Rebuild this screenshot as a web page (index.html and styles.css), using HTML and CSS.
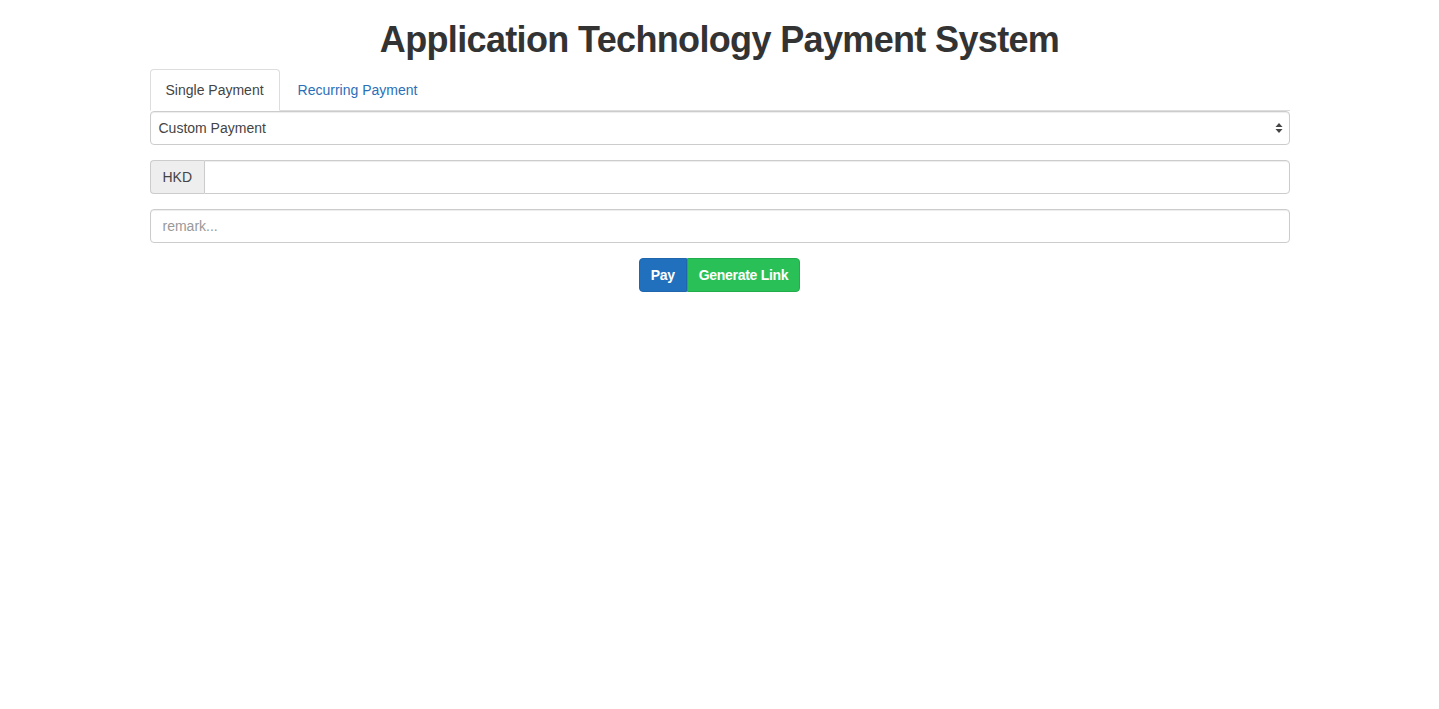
FILE: index.html
```html
<!DOCTYPE html>
<html>
<head>
<meta charset="utf-8">
<title>Application Technology Payment System</title>
<link rel="stylesheet" href="styles.css">
</head>
<body>
<div class="container">
  <h1 class="title">Application Technology Payment System</h1>
  <ul class="tabs">
    <li class="tab active"><a href="#">Single Payment</a></li>
    <li class="tab"><a href="#">Recurring Payment</a></li>
  </ul>
  <form class="form">
    <div class="group">
      <div class="select">
        <span>Custom Payment</span>
        <svg class="arrows" width="8" height="12" viewBox="0 0 8 12"><path d="M4 1 L7.5 5 L0.5 5 Z M4 11 L7.5 7 L0.5 7 Z" fill="#444"/></svg>
      </div>
    </div>
    <div class="group">
      <div class="input-group">
        <span class="addon">HKD</span>
        <input class="control grow" type="text">
      </div>
    </div>
    <div class="group">
      <input class="control" type="text" placeholder="remark...">
    </div>
    <div class="actions">
      <button type="button" class="btn btn-pay">Pay</button><button type="button" class="btn btn-link">Generate Link</button>
    </div>
  </form>
</div>
</body>
</html>
```
FILE: styles.css
```css
* { box-sizing: border-box; }
html, body { margin: 0; padding: 0; background: #fff; }
body {
  font-family: "Liberation Sans", Arial, sans-serif;
  font-size: 14px;
  line-height: 20px;
  color: #333;
}
.container {
  width: 1140px;
  margin: 0 auto;
}
.title {
  margin: 20px 0 9px;
  font-size: 36px;
  line-height: 40px;
  font-weight: bold;
  letter-spacing: -0.65px;
  text-align: center;
  color: #333;
}
.tabs {
  list-style: none;
  margin: 0;
  padding: 0;
  display: flex;
  border-bottom: 1px solid #ddd;
}
.tab { margin-bottom: -1px; margin-right: 2px; }
.tab a {
  display: block;
  padding: 10px 15px;
  border: 1px solid transparent;
  border-radius: 4px 4px 0 0;
  color: #2a6fb8;
  text-decoration: none;
}
.tab.active a {
  color: #444;
  background: #fff;
  border-color: #ddd #ddd transparent;
}
.form { margin: 0; }
.group { margin-bottom: 15px; }
.select {
  height: 34px;
  border: 1px solid #ccc;
  border-radius: 4px;
  display: flex;
  align-items: center;
  justify-content: space-between;
  padding: 0 6px 0 8px;
  color: #444;
  box-shadow: inset 0 1px 1px rgba(0,0,0,.075);
}
.control {
  display: block;
  width: 100%;
  height: 34px;
  padding: 6px 12px;
  font: inherit;
  color: #555;
  border: 1px solid #ccc;
  border-radius: 4px;
  box-shadow: inset 0 1px 1px rgba(0,0,0,.075);
  outline: none;
}
.control::placeholder { color: #999; }
.input-group { display: flex; }
.addon {
  display: flex;
  align-items: center;
  padding: 0 12px;
  background: #eee;
  border: 1px solid #ccc;
  border-right: 0;
  border-radius: 4px 0 0 4px;
  color: #444;
}
.grow { flex: 1; border-radius: 0 4px 4px 0; }
.actions {
  display: flex;
  justify-content: center;
}
.btn {
  height: 34px;
  padding: 6px 11px;
  font: inherit;
  font-weight: bold;
  letter-spacing: -0.3px;
  color: #fff;
  border: 1px solid transparent;
  cursor: pointer;
}
.btn-pay {
  background: #2170bd;
  border-color: #1f66ad;
  border-radius: 4px 0 0 4px;
}
.btn-link {
  background: #29c157;
  border-color: #22ad4c;
  border-radius: 0 4px 4px 0;
}
```
